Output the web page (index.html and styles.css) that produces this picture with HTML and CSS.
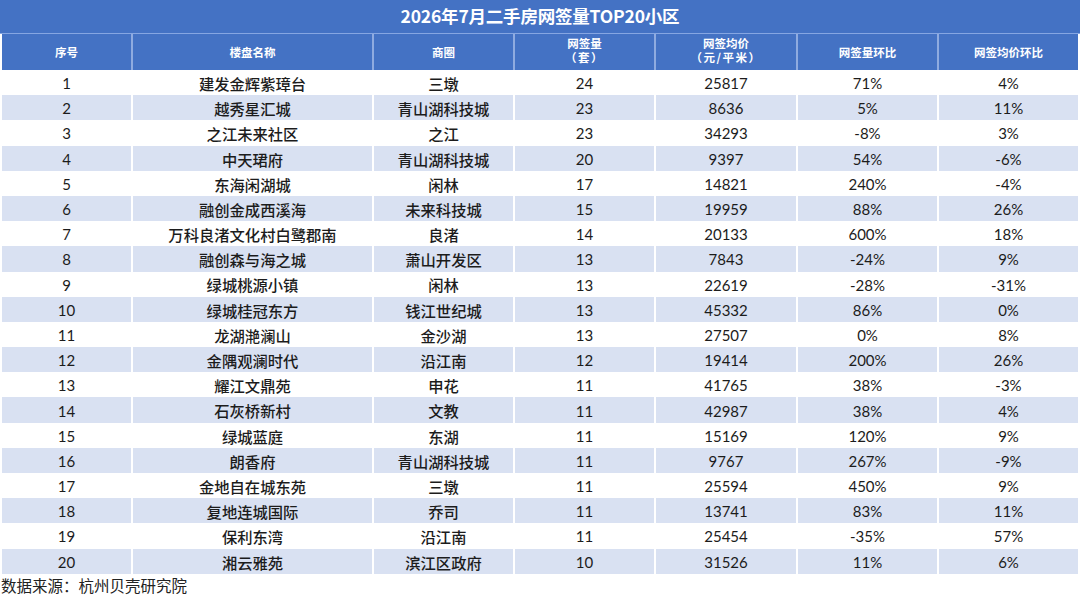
FILE: index.html
```html
<!DOCTYPE html>
<html lang="zh-CN">
<head>
<meta charset="utf-8">
<title>2026年7月二手房网签量TOP20小区</title>
<link rel="stylesheet" href="styles.css">
</head>
<body>
<div class="sheet">
  <div class="title">2026年7月二手房网签量TOP20小区</div>
  <div class="row head">
    <div class="c">序号</div>
    <div class="c">楼盘名称</div>
    <div class="c">商圈</div>
    <div class="c two"><span>网签量</span><span class="paren">（套）</span></div>
    <div class="c two"><span>网签均价</span><span class="paren">（元/平米）</span></div>
    <div class="c">网签量环比</div>
    <div class="c">网签均价环比</div>
  </div>
  <div class="row"><div class="c">1</div><div class="c">建发金辉紫璋台</div><div class="c">三墩</div><div class="c">24</div><div class="c">25817</div><div class="c">71%</div><div class="c">4%</div></div>
  <div class="row alt"><div class="c">2</div><div class="c">越秀星汇城</div><div class="c">青山湖科技城</div><div class="c">23</div><div class="c">8636</div><div class="c">5%</div><div class="c">11%</div></div>
  <div class="row"><div class="c">3</div><div class="c">之江未来社区</div><div class="c">之江</div><div class="c">23</div><div class="c">34293</div><div class="c">-8%</div><div class="c">3%</div></div>
  <div class="row alt"><div class="c">4</div><div class="c">中天珺府</div><div class="c">青山湖科技城</div><div class="c">20</div><div class="c">9397</div><div class="c">54%</div><div class="c">-6%</div></div>
  <div class="row"><div class="c">5</div><div class="c">东海闲湖城</div><div class="c">闲林</div><div class="c">17</div><div class="c">14821</div><div class="c">240%</div><div class="c">-4%</div></div>
  <div class="row alt"><div class="c">6</div><div class="c">融创金成西溪海</div><div class="c">未来科技城</div><div class="c">15</div><div class="c">19959</div><div class="c">88%</div><div class="c">26%</div></div>
  <div class="row"><div class="c">7</div><div class="c">万科良渚文化村白鹭郡南</div><div class="c">良渚</div><div class="c">14</div><div class="c">20133</div><div class="c">600%</div><div class="c">18%</div></div>
  <div class="row alt"><div class="c">8</div><div class="c">融创森与海之城</div><div class="c">萧山开发区</div><div class="c">13</div><div class="c">7843</div><div class="c">-24%</div><div class="c">9%</div></div>
  <div class="row"><div class="c">9</div><div class="c">绿城桃源小镇</div><div class="c">闲林</div><div class="c">13</div><div class="c">22619</div><div class="c">-28%</div><div class="c">-31%</div></div>
  <div class="row alt"><div class="c">10</div><div class="c">绿城桂冠东方</div><div class="c">钱江世纪城</div><div class="c">13</div><div class="c">45332</div><div class="c">86%</div><div class="c">0%</div></div>
  <div class="row"><div class="c">11</div><div class="c">龙湖滟澜山</div><div class="c">金沙湖</div><div class="c">13</div><div class="c">27507</div><div class="c">0%</div><div class="c">8%</div></div>
  <div class="row alt"><div class="c">12</div><div class="c">金隅观澜时代</div><div class="c">沿江南</div><div class="c">12</div><div class="c">19414</div><div class="c">200%</div><div class="c">26%</div></div>
  <div class="row"><div class="c">13</div><div class="c">耀江文鼎苑</div><div class="c">申花</div><div class="c">11</div><div class="c">41765</div><div class="c">38%</div><div class="c">-3%</div></div>
  <div class="row alt"><div class="c">14</div><div class="c">石灰桥新村</div><div class="c">文教</div><div class="c">11</div><div class="c">42987</div><div class="c">38%</div><div class="c">4%</div></div>
  <div class="row"><div class="c">15</div><div class="c">绿城蓝庭</div><div class="c">东湖</div><div class="c">11</div><div class="c">15169</div><div class="c">120%</div><div class="c">9%</div></div>
  <div class="row alt"><div class="c">16</div><div class="c">朗香府</div><div class="c">青山湖科技城</div><div class="c">11</div><div class="c">9767</div><div class="c">267%</div><div class="c">-9%</div></div>
  <div class="row"><div class="c">17</div><div class="c">金地自在城东苑</div><div class="c">三墩</div><div class="c">11</div><div class="c">25594</div><div class="c">450%</div><div class="c">9%</div></div>
  <div class="row alt"><div class="c">18</div><div class="c">复地连城国际</div><div class="c">乔司</div><div class="c">11</div><div class="c">13741</div><div class="c">83%</div><div class="c">11%</div></div>
  <div class="row"><div class="c">19</div><div class="c">保利东湾</div><div class="c">沿江南</div><div class="c">11</div><div class="c">25454</div><div class="c">-35%</div><div class="c">57%</div></div>
  <div class="row alt"><div class="c">20</div><div class="c">湘云雅苑</div><div class="c">滨江区政府</div><div class="c">10</div><div class="c">31526</div><div class="c">11%</div><div class="c">6%</div></div>
</div>
<div class="source">数据来源：杭州贝壳研究院</div>
</body>
</html>
```
FILE: styles.css
```css
* { box-sizing: border-box; }
html, body {
  margin: 0;
  padding: 0;
  background: #ffffff;
  width: 1080px;
  height: 597px;
  overflow: hidden;
}
body {
  font-family: Lato, "Noto Sans CJK SC", sans-serif;
  color: #1c1c1c;
}
.sheet {
  width: 1080px;
}
.title {
  height: 34px;
  background: #4472c4;
  border-bottom: 1px solid #86a6e2;
  color: #ffffff;
  font-family: "Noto Sans CJK SC", sans-serif;
  font-weight: 700;
  font-size: 17.5px;
  line-height: 32px;
  text-align: center;
  letter-spacing: -0.2px;
}
.row {
  display: grid;
  grid-template-columns: 129px 239px 139px 139px 140px 139px 139px;
  column-gap: 2px;
  margin: 0 2px;
  height: 25.2px;
  background: #ffffff;
}
.row .c {
  display: flex;
  align-items: center;
  justify-content: center;
  font-size: 15px;
  line-height: 1;
  padding-top: 2px;
  white-space: nowrap;
}
.row .c:nth-child(2),
.row .c:nth-child(3) {
  font-family: "Noto Sans CJK SC", sans-serif;
  font-size: 15.3px;
  font-weight: 500;
}
.row.alt .c {
  background: #d9e1f2;
}
.row.head {
  height: 36px;
  background: #8fabe0;
}
.row.head .c {
  background: #4472c4;
  color: #ffffff;
  font-family: "Noto Sans CJK SC", sans-serif;
  font-weight: 700;
  font-size: 11.5px;
  line-height: 14px;
  text-align: center;
  padding-top: 0;
}
.row.head .c.two {
  flex-direction: column;
  justify-content: flex-start;
  padding-top: 2px;
}
.row.head .c.two span {
  display: block;
  line-height: 14px;
}
.row.head .c.two .paren {
  letter-spacing: 1.5px;
}
.source {
  margin: 0 0 0 1px;
  font-family: "Noto Sans CJK SC", sans-serif;
  font-size: 15.5px;
  line-height: 22px;
  color: #222222;
}
```
